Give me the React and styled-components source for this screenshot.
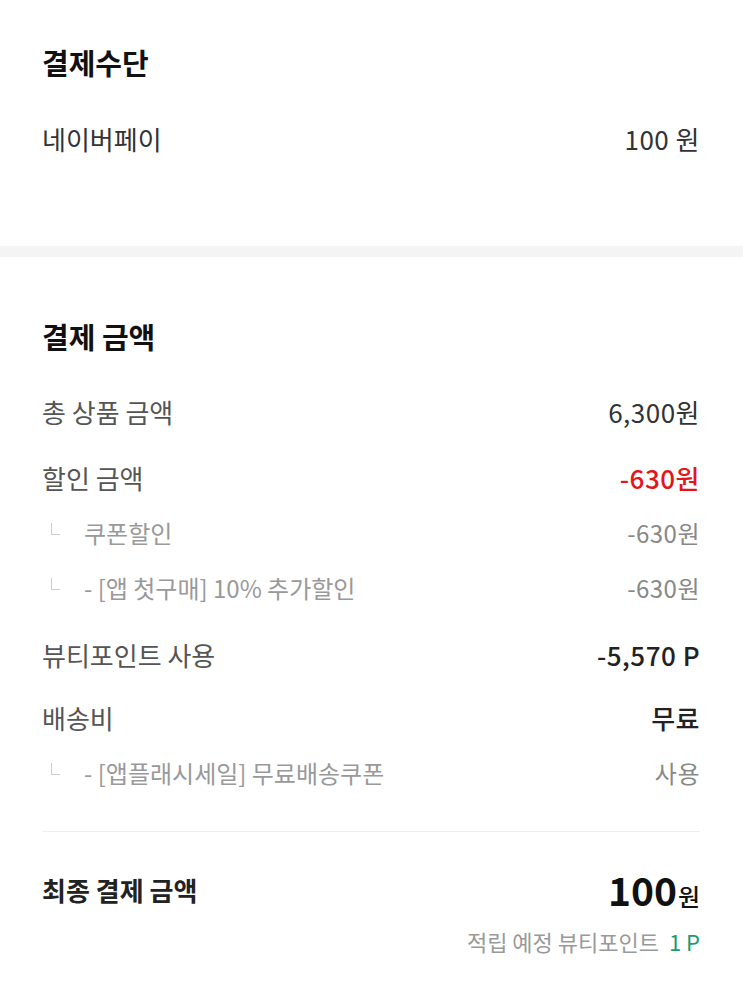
import React from "react";
import styled, { createGlobalStyle } from "styled-components";

const GlobalStyle = createGlobalStyle`
  body {
    margin: 0;
    background: #fff;
    font-family: "Noto Sans CJK KR", "Noto Sans", sans-serif;
    color: #222;
  }
`;

const Page = styled.div`
  width: 743px;
`;

const Section = styled.section`
  padding: ${(props) => props.pad};
`;

const Band = styled.div`
  height: 11px;
  background-color: #f4f4f4;
`;

const Title = styled.h2`
  margin: 0;
  font-size: 29px;
  font-weight: 700;
  line-height: 40px;
  color: #111;
`;

const Row = styled.div`
  display: flex;
  align-items: center;
  justify-content: space-between;
  height: ${(props) => props.h || 55}px;
  margin-top: ${(props) => props.mt || 0}px;
`;

const Label = styled.span`
  font-size: 26px;
  color: ${(props) => props.color || "#555"};
  font-weight: ${(props) => props.weight || 400};
`;

const Value = styled.span`
  font-size: 26px;
  color: ${(props) => props.color || "#333"};
  font-weight: ${(props) => props.weight || 400};
  letter-spacing: 0.5px;
`;

const SubLabel = styled.span`
  display: flex;
  align-items: center;
  font-size: 24px;
  color: #999;
`;

const Corner = styled.span`
  display: inline-block;
  width: 8px;
  height: 11px;
  margin: 0 24px 0 9px;
  border-left: 1px solid #ccc;
  border-bottom: 1px solid #ccc;
  transform: translateY(-4px);
`;

const SubValue = styled.span`
  font-size: 24px;
  color: #888;
  letter-spacing: 0.5px;
`;

const Divider = styled.hr`
  margin: 31px 0 0;
  border: none;
  height: 1px;
  background-color: #eee;
`;

const TotalAmount = styled.span`
  display: flex;
  align-items: baseline;
  color: #111;
`;

const Big = styled.span`
  font-size: 39px;
  font-weight: 700;
`;

const Won = styled.span`
  font-size: 24px;
  font-weight: 500;
  margin-left: 1px;
`;

const Earn = styled.div`
  display: flex;
  justify-content: flex-end;
  align-items: center;
  height: 30px;
  margin-top: 12px;
  font-size: 22px;
  color: #999;
`;

const Point = styled.span`
  color: #1a9c6c;
  margin-left: 10px;
`;

const SubRow = ({ label, value }) => (
  <Row>
    <SubLabel>
      <Corner />
      {label}
    </SubLabel>
    <SubValue>{value}</SubValue>
  </Row>
);

const App = () => {
  return (
    <Page>
      <GlobalStyle />
      <Section pad="42px 43px 83px 42px">
        <Title>결제수단</Title>
        <Row h={50} mt={31}>
          <Label color="#333">네이버페이</Label>
          <Value>100 원</Value>
        </Row>
      </Section>
      <Band />
      <Section pad="59px 43px 40px 42px">
        <Title>결제 금액</Title>
        <Row mt={28}>
          <Label>총 상품 금액</Label>
          <Value>6,300원</Value>
        </Row>
        <Row mt={11}>
          <Label>할인 금액</Label>
          <Value color="#e4141b" weight={500}>
            -630원
          </Value>
        </Row>
        <SubRow label="쿠폰할인" value="-630원" />
        <SubRow label="- [앱 첫구매] 10% 추가할인" value="-630원" />
        <Row mt={12}>
          <Label>뷰티포인트 사용</Label>
          <Value color="#222" weight={500}>
            -5,570 P
          </Value>
        </Row>
        <Row mt={8}>
          <Label>배송비</Label>
          <Value color="#222" weight={500}>
            무료
          </Value>
        </Row>
        <SubRow label="- [앱플래시세일] 무료배송쿠폰" value="사용" />
        <Divider />
        <Row h={50} mt={32}>
          <Label color="#222" weight={700}>
            최종 결제 금액
          </Label>
          <TotalAmount>
            <Big>100</Big>
            <Won>원</Won>
          </TotalAmount>
        </Row>
        <Earn>
          적립 예정 뷰티포인트<Point>1 P</Point>
        </Earn>
      </Section>
    </Page>
  );
};

export default App;
